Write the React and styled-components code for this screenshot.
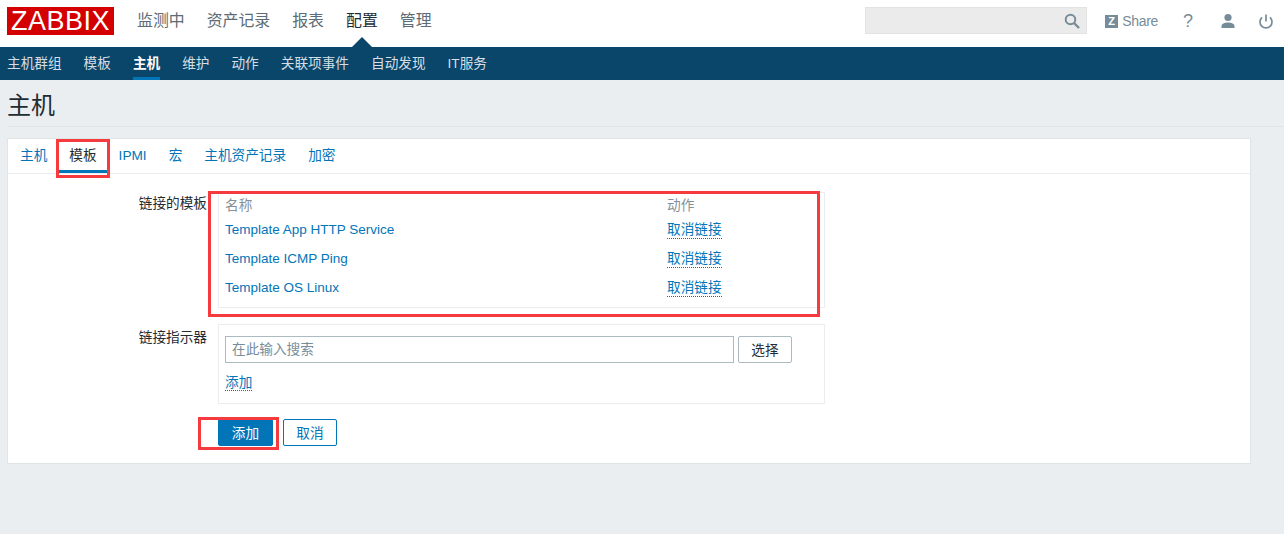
import React from "react";
import styled, { createGlobalStyle } from "styled-components";

const GlobalStyle = createGlobalStyle`
  html, body { margin: 0; padding: 0; background: #ebeef0; }
  body { font-family: "Liberation Sans", "Noto Sans CJK SC", sans-serif; font-size: 13.65px; color: #1f2c33; }
`;

const Page = styled.div`
  position: relative;
  width: 1284px;
  height: 534px;
  overflow: hidden;
`;

const Header = styled.header`
  height: 47px;
  box-sizing: border-box;
  background: #fff;
  display: flex;
  align-items: center;
  padding: 0 10px 5px 7px;
`;

const Logo = styled.div`
  width: 107px;
  height: 28px;
  background: #d40000;
  color: #fff;
  font-size: 27px;
  letter-spacing: 0.5px;
  line-height: 29px;
  text-align: center;
`;

const MainNav = styled.nav`
  display: flex;
  margin-left: 12px;
  flex: 1;
`;

const MainItem = styled.a`
  position: relative;
  padding: 0 11px;
  font-size: 15.9px;
  line-height: 28px;
  color: ${(p) => (p.$active ? "#1f2c33" : "#5c6b75")};
  ${(p) =>
    p.$active &&
    `&::after {
      content: "";
      position: absolute;
      left: 50%;
      top: 30px;
      margin-left: -10px;
      border-left: 10px solid transparent;
      border-right: 10px solid transparent;
      border-bottom: 10px solid #0a466a;
    }`}
`;

const SearchBox = styled.div`
  width: 215px;
  height: 25px;
  margin-top: -1px;
  background: #ebebeb;
  border: 1px solid #e3e3e3;
  display: flex;
  align-items: center;
  justify-content: flex-end;
  padding-right: 5px;
`;

const Tools = styled.div`
  display: flex;
  align-items: center;
  margin-left: 18px;
  color: #768d99;
`;

const ZMark = styled.span`
  width: 13px;
  height: 13px;
  background: #768d99;
  color: #fff;
  font-size: 11px;
  font-weight: 700;
  line-height: 13px;
  text-align: center;
  margin-right: 3px;
`;

const ShareText = styled.span`
  font-size: 14px;
  letter-spacing: -0.3px;
  margin-left: 1px;
  margin-right: 20px;
`;

const Help = styled.span`
  font-size: 18px;
  width: 20px;
  text-align: center;
  margin-right: 22px;
`;

const IconSlot = styled.svg`
  display: block;
  margin-right: ${(p) => p.$gap || 0}px;
`;

const SubNav = styled.nav`
  height: 33px;
  background: #0a466a;
  display: flex;
  padding-left: 7px;
  gap: 22px;
`;

const SubItem = styled.a`
  height: 33px;
  box-sizing: border-box;
  line-height: 34px;
  color: ${(p) => (p.$active ? "#fff" : "#d5dfe5")};
  font-weight: ${(p) => (p.$active ? 700 : 400)};
  border-bottom: 3px solid ${(p) => (p.$active ? "#0275b8" : "transparent")};
`;

const Content = styled.main`
  padding: 0 33px 0 7px;
`;

const Title = styled.h1`
  margin: 0 -33px 0 0;
  height: 46px;
  line-height: 52px;
  font-size: 24px;
  font-weight: 400;
  color: #1f2c33;
  border-bottom: 1px solid #dfe4e7;
`;

const Card = styled.section`
  margin-top: 11px;
  height: 326px;
  box-sizing: border-box;
  background: #fff;
  border: 1px solid #dfe4e7;
`;

const Tabs = styled.div`
  height: 34px;
  display: flex;
  padding-left: 1px;
  border-bottom: 1px solid #ebeef0;
`;

const Tab = styled.a`
  padding: 0 11px;
  height: 34px;
  box-sizing: border-box;
  line-height: 33px;
  color: ${(p) => (p.$active ? "#1f2c33" : "#0275b8")};
  border-bottom: 3px solid ${(p) => (p.$active ? "#0275b8" : "transparent")};
`;

const Form = styled.div`
  padding-top: 18px;
`;

const Row = styled.div`
  display: flex;
  margin-bottom: ${(p) => p.$after}px;
`;

const Label = styled.div`
  width: 199px;
  text-align: right;
  line-height: 20px;
  padding-top: ${(p) => p.$top}px;
  flex: none;
`;

const Panel = styled.div`
  margin-left: 11px;
  width: 607px;
  height: ${(p) => p.$h}px;
  box-sizing: border-box;
  border: 1px solid #ebeef0;
  padding: ${(p) => p.$pad};
`;

const Grid = styled.div`
  display: grid;
  grid-template-columns: 442px 1fr;
  grid-template-rows: 20px repeat(3, 29px);
  align-items: center;
`;

const HeadCell = styled.div`
  color: #869099;
  line-height: 20px;
  margin-top: 2px;
`;

const TextLink = styled.a`
  color: #0275b8;
  font-size: 13.5px;
  justify-self: start;
`;

const DottedLink = styled.a`
  color: #0275b8;
  justify-self: start;
  line-height: 16px;
  margin-top: 2px;
  border-bottom: 1px dotted #0275b8;
`;

const Picker = styled.div`
  display: flex;
  gap: 4px;
  margin-bottom: 12px;
`;

const Input = styled.div`
  width: 509px;
  height: 27px;
  box-sizing: border-box;
  border: 1px solid #acbbc2;
  padding-left: 6px;
  line-height: 25px;
  color: #768d99;
`;

const Btn = styled.button`
  font: inherit;
  padding: 0 0 2px;
  width: ${(p) => p.$w}px;
  height: 27px;
  border-radius: 2px;
  background: ${(p) => (p.$primary ? "#0275b8" : "#fff")};
  color: ${(p) => (p.$primary ? "#fff" : p.$blue ? "#0275b8" : "#1f2c33")};
  border: 1px solid ${(p) => (p.$primary || p.$blue ? "#0275b8" : "#acbbc2")};
`;

const Actions = styled.div`
  display: flex;
  gap: 10px;
  margin-left: 210px;
`;

const Note = styled.div`
  position: absolute;
  left: ${(p) => p.$x}px;
  top: ${(p) => p.$y}px;
  width: ${(p) => p.$w}px;
  height: ${(p) => p.$h}px;
  box-sizing: border-box;
  border: 3px solid #f63b3f;
`;

const mainItems = ["监测中", "资产记录", "报表", "配置", "管理"];
const subItems = ["主机群组", "模板", "主机", "维护", "动作", "关联项事件", "自动发现", "IT服务"];
const tabs = ["主机", "模板", "IPMI", "宏", "主机资产记录", "加密"];
const templates = ["Template App HTTP Service", "Template ICMP Ping", "Template OS Linux"];

export default function App() {
  return (
    <Page>
      <GlobalStyle />
      <Header>
        <Logo>ZABBIX</Logo>
        <MainNav>
          {mainItems.map((m) => (
            <MainItem key={m} $active={m === "配置"}>{m}</MainItem>
          ))}
        </MainNav>
        <SearchBox>
          <svg width="18" height="18" viewBox="0 0 18 18" fill="none" stroke="#768d99" strokeWidth="2">
            <circle cx="7.5" cy="7.5" r="4.8" />
            <path d="M11 11l5 5" strokeWidth="2.4" />
          </svg>
        </SearchBox>
        <Tools>
          <ZMark>Z</ZMark>
          <ShareText>Share</ShareText>
          <Help>?</Help>
          <IconSlot $gap={22} width="16" height="16" viewBox="0 0 16 16" fill="#768d99">
            <circle cx="8" cy="4.5" r="3.6" />
            <path d="M1.5 15v-2c0-2.4 3-3.6 6.5-3.6s6.5 1.2 6.5 3.6v2z" />
          </IconSlot>
          <IconSlot width="16" height="16" viewBox="0 0 16 16" fill="none" stroke="#768d99" strokeWidth="1.7">
            <path d="M8 1.5v7" />
            <path d="M4 3.8a6 6 0 1 0 8 0" transform="translate(0 .6)" />
          </IconSlot>
        </Tools>
      </Header>
      <SubNav>
        {subItems.map((s) => (
          <SubItem key={s} $active={s === "主机"}>{s}</SubItem>
        ))}
      </SubNav>
      <Content>
        <Title>主机</Title>
        <Card>
          <Tabs>
            {tabs.map((t) => (
              <Tab key={t} $active={t === "模板"}>{t}</Tab>
            ))}
          </Tabs>
          <Form>
            <Row $after={16}>
              <Label $top={2}>链接的模板</Label>
              <Panel $h={116} $pad="2px 6px">
                <Grid>
                  <HeadCell>名称</HeadCell>
                  <HeadCell>动作</HeadCell>
                  {templates.map((t) => (
                    <React.Fragment key={t}>
                      <TextLink>{t}</TextLink>
                      <DottedLink>取消链接</DottedLink>
                    </React.Fragment>
                  ))}
                </Grid>
              </Panel>
            </Row>
            <Row $after={15}>
              <Label $top={4}>链接指示器</Label>
              <Panel $h={80} $pad="11px 6px">
                <Picker>
                  <Input>在此输入搜索</Input>
                  <Btn $w={54}>选择</Btn>
                </Picker>
                <DottedLink>添加</DottedLink>
              </Panel>
            </Row>
            <Actions>
              <Btn $primary $w={55}>添加</Btn>
              <Btn $blue $w={54}>取消</Btn>
            </Actions>
          </Form>
        </Card>
      </Content>
      <Note $x={56} $y={139} $w={54} $h={39} />
      <Note $x={208} $y={191} $w={612} $h={126} />
      <Note $x={198} $y={417} $w={81} $h={33} />
    </Page>
  );
}
